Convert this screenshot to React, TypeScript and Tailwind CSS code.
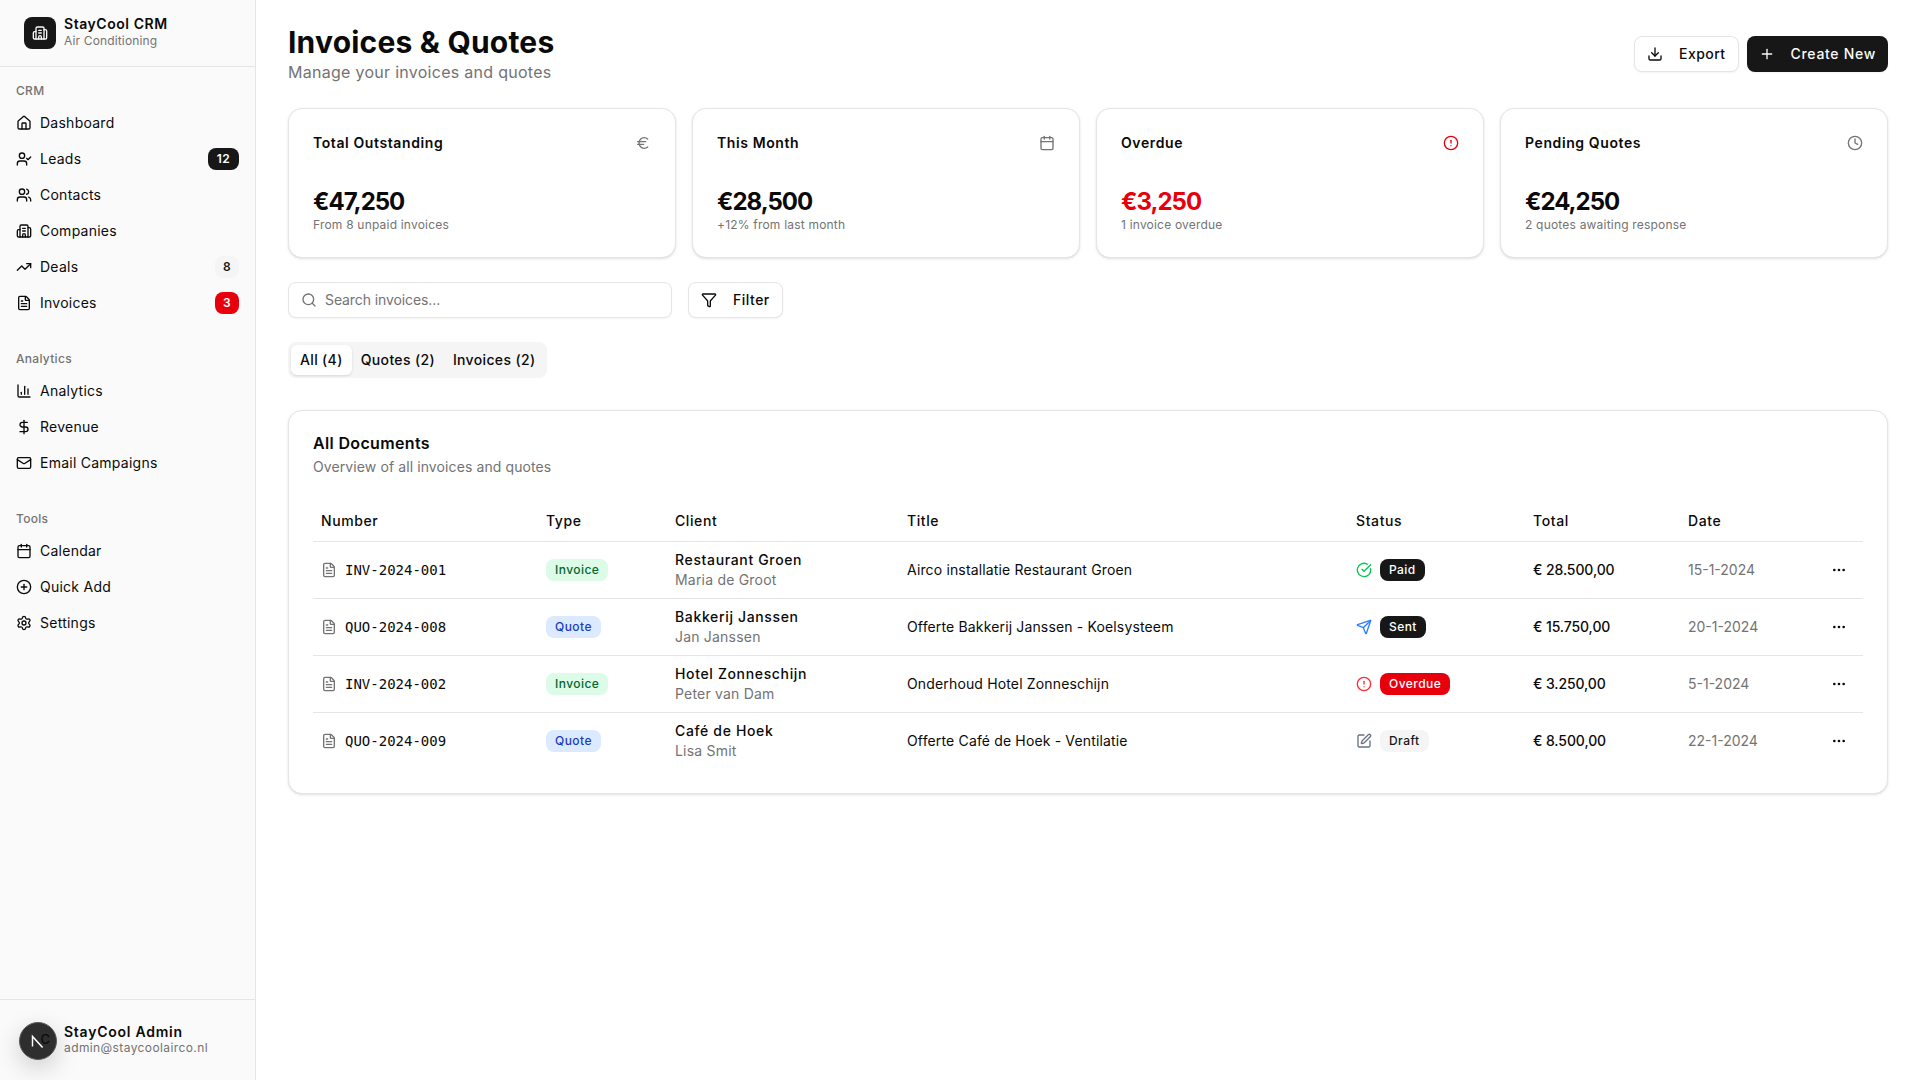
import {
  AlertCircle,
  BarChart3,
  Building2,
  Calendar,
  CheckCircle,
  CirclePlus,
  Clock,
  DollarSign,
  Download,
  Euro,
  FileText,
  Filter,
  House,
  Mail,
  MoreHorizontal,
  Plus,
  Search,
  Send,
  Settings,
  SquarePen,
  TrendingUp,
  UserCheck,
  Users,
} from "lucide-react";

const navGroups = [
  {
    title: "CRM",
    items: [
      { label: "Dashboard", icon: House },
      { label: "Leads", icon: UserCheck, badge: "12", badgeClass: "bg-[#171717] text-white px-[9px]" },
      { label: "Contacts", icon: Users },
      { label: "Companies", icon: Building2 },
      { label: "Deals", icon: TrendingUp, badge: "8", badgeClass: "bg-[#f5f5f5] text-[#171717] px-[8px]" },
      { label: "Invoices", icon: FileText, badge: "3", badgeClass: "bg-[#e7000b] text-white px-[8px]" },
    ],
  },
  {
    title: "Analytics",
    items: [
      { label: "Analytics", icon: BarChart3 },
      { label: "Revenue", icon: DollarSign },
      { label: "Email Campaigns", icon: Mail },
    ],
  },
  {
    title: "Tools",
    items: [
      { label: "Calendar", icon: Calendar },
      { label: "Quick Add", icon: CirclePlus },
      { label: "Settings", icon: Settings },
    ],
  },
];

const stats = [
  { title: "Total Outstanding", value: "€47,250", note: "From 8 unpaid invoices", icon: Euro, iconClass: "text-[#737373]", valueClass: "text-[#0a0a0a]" },
  { title: "This Month", value: "€28,500", note: "+12% from last month", icon: Calendar, iconClass: "text-[#737373]", valueClass: "text-[#0a0a0a]" },
  { title: "Overdue", value: "€3,250", note: "1 invoice overdue", icon: AlertCircle, iconClass: "text-[#e7000b]", valueClass: "text-[#e7000b]" },
  { title: "Pending Quotes", value: "€24,250", note: "2 quotes awaiting response", icon: Clock, iconClass: "text-[#737373]", valueClass: "text-[#0a0a0a]" },
];

const rows = [
  { number: "INV-2024-001", type: "Invoice", client: "Restaurant Groen", contact: "Maria de Groot", title: "Airco installatie Restaurant Groen", status: "Paid", total: "€ 28.500,00", date: "15-1-2024" },
  { number: "QUO-2024-008", type: "Quote", client: "Bakkerij Janssen", contact: "Jan Janssen", title: "Offerte Bakkerij Janssen - Koelsysteem", status: "Sent", total: "€ 15.750,00", date: "20-1-2024" },
  { number: "INV-2024-002", type: "Invoice", client: "Hotel Zonneschijn", contact: "Peter van Dam", title: "Onderhoud Hotel Zonneschijn", status: "Overdue", total: "€ 3.250,00", date: "5-1-2024" },
  { number: "QUO-2024-009", type: "Quote", client: "Café de Hoek", contact: "Lisa Smit", title: "Offerte Café de Hoek - Ventilatie", status: "Draft", total: "€ 8.500,00", date: "22-1-2024" },
];

function Pill({ className, children }: { className: string; children: string }) {
  return (
    <span className={`inline-flex h-[22px] items-center rounded-lg text-xs font-medium tracking-[0.45px] px-[9px] ${className}`}>
      {children}
    </span>
  );
}

function StatusCell({ status }: { status: string }) {
  if (status === "Paid") {
    return (
      <div className="flex items-center gap-2">
        <CheckCircle className="w-4 h-4 text-[#00c950]" />
        <Pill className="bg-[#171717] text-white">Paid</Pill>
      </div>
    );
  }
  if (status === "Sent") {
    return (
      <div className="flex items-center gap-2">
        <Send className="w-4 h-4 text-[#2b7fff]" />
        <Pill className="bg-[#171717] text-white">Sent</Pill>
      </div>
    );
  }
  if (status === "Overdue") {
    return (
      <div className="flex items-center gap-2">
        <AlertCircle className="w-4 h-4 text-[#fb2c36]" />
        <Pill className="bg-[#e7000b] text-white">Overdue</Pill>
      </div>
    );
  }
  return (
    <div className="flex items-center gap-2">
      <SquarePen className="w-4 h-4 text-[#6a7282]" />
      <Pill className="bg-[#f5f5f5] text-[#171717]">Draft</Pill>
    </div>
  );
}

export default function App() {
  return (
    <div className="flex h-screen bg-white text-[#0a0a0a] font-['Inter',sans-serif] overflow-hidden">
      {/* Sidebar */}
      <aside className="w-[256px] shrink-0 flex flex-col bg-[#fafafa] border-r border-[#e5e5e5]">
        <div className="h-[67px] flex items-center gap-2 px-6 border-b border-[#e5e5e5]">
          <div className="w-8 h-8 rounded-lg bg-[#171717] flex items-center justify-center">
            <Building2 className="w-4 h-4 text-[#fafafa]" />
          </div>
          <div className="mb-[2px]">
            <p className="text-sm font-semibold leading-[17px] tracking-[0.55px] text-[#0a0a0a]">StayCool CRM</p>
            <p className="text-xs leading-[16px] mt-[1px] tracking-[0.15px] text-[#737373]">Air Conditioning</p>
          </div>
        </div>

        <nav className="flex-1 pt-[2px] px-2">
          {navGroups.map((group) => (
            <div key={group.title} className="p-2 mb-2">
              <p className="h-7 flex items-center text-xs font-medium tracking-[0.3px] text-[#737373]">{group.title}</p>
              <ul>
                {group.items.map((item) => (
                  <li key={item.label} className="h-9 flex items-center gap-2 text-sm tracking-[0.25px] text-[#0a0a0a]">
                    <item.icon className="w-4 h-4" />
                    <span className="flex-1">{item.label}</span>
                    {item.badge && (
                      <span className={`rounded-lg text-xs font-semibold tracking-[0.3px] py-[3px] ${item.badgeClass}`}>{item.badge}</span>
                    )}
                  </li>
                ))}
              </ul>
            </div>
          ))}
        </nav>

        <div className="h-[81px] flex items-center gap-2 px-6 border-t border-[#e5e5e5]">
          <div className="relative w-8 h-8 shrink-0">
            <div className="absolute -left-[5px] -top-[2px] w-[38px] h-[38px] rounded-full bg-[#2e2e2e] border border-[#5a5a5a] shadow-[0_8px_24px_rgba(0,0,0,0.18)] flex items-center justify-center">
              <svg viewBox="0 0 24 24" className="w-[22px] h-[22px]" fill="none">
                <path d="M6 18V7l11 12" stroke="#fff" strokeWidth="1.6" />
              </svg>
              <span className="absolute right-[6px] top-[8px] text-[13px] leading-[16px] font-medium text-[#0a0a0a]">C</span>
            </div>
          </div>
          <div>
            <p className="text-sm font-semibold leading-[17px] tracking-[0.75px] -mt-[2px]">StayCool Admin</p>
            <p className="text-xs leading-[16px] tracking-[0.4px] text-[#737373]">admin@staycoolairco.nl</p>
          </div>
        </div>
      </aside>

      {/* Main */}
      <main className="flex-1 min-w-0 px-8 pt-6">
        <div className="flex items-start justify-between h-[60px] mb-6">
          <div>
            <h1 className="text-3xl font-bold leading-[36px] tracking-[0.2px]">Invoices &amp; Quotes</h1>
            <p className="text-base leading-[24px] tracking-[0.28px] text-[#737373]">Manage your invoices and quotes</p>
          </div>
          <div className="flex gap-2 mt-[12px]">
            <button className="h-9 flex items-center gap-4 px-3 rounded-lg border border-[#e5e5e5] bg-white text-sm font-medium tracking-[0.45px] shadow-xs">
              <Download className="w-4 h-4" />
              Export
            </button>
            <button className="h-9 flex items-center gap-4 px-3 rounded-lg bg-[#171717] text-[#fafafa] text-sm font-medium tracking-[0.7px] shadow-xs">
              <Plus className="w-4 h-4" />
              Create New
            </button>
          </div>
        </div>

        <div className="grid grid-cols-4 gap-4 mb-6">
          {stats.map((s) => (
            <div key={s.title} className="h-[150px] rounded-[14px] border border-[#e5e5e5] bg-white shadow-sm p-6">
              <div className="flex items-center justify-between h-5">
                <h3 className="text-sm font-semibold tracking-[0.6px]">{s.title}</h3>
                <s.icon className={`w-4 h-4 ${s.iconClass}`} />
              </div>
              <p className={`text-2xl font-bold leading-[32px] mt-[33px] tracking-[-1px] ${s.valueClass}`}>{s.value}</p>
              <p className="text-xs leading-[16px] tracking-[0.2px] -mt-[1px] text-[#737373]">{s.note}</p>
            </div>
          ))}
        </div>

        <div className="flex items-center gap-4 mb-6">
          <div className="w-[384px] h-9 flex items-center gap-2 rounded-lg border border-[#e5e5e5] bg-white shadow-xs px-3">
            <Search className="w-4 h-4 text-[#737373]" />
            <span className="text-sm tracking-[-0.1px] text-[#737373]">Search invoices...</span>
          </div>
          <button className="h-9 flex items-center gap-4 px-3 rounded-lg border border-[#e5e5e5] bg-white text-sm font-medium tracking-[0.5px] shadow-xs">
            <Filter className="w-4 h-4" />
            Filter
          </button>
        </div>

        <div className="inline-flex h-9 items-center rounded-lg bg-[#f5f5f5] p-[3px] mb-8 text-sm font-medium tracking-[0.35px]">
          <span className="h-full flex items-center rounded-md bg-white shadow-sm px-[9px]">All (4)</span>
          <span className="h-full flex items-center px-[9px]">Quotes (2)</span>
          <span className="h-full flex items-center px-[9px]">Invoices (2)</span>
        </div>

        <section className="rounded-[14px] border border-[#e5e5e5] bg-white shadow-sm px-6 pt-6 pb-6">
          <h2 className="text-base font-semibold leading-[16px] tracking-[0.35px]">All Documents</h2>
          <p className="text-sm leading-[20px] tracking-[0.1px] text-[#737373] mt-[6px] mb-6">Overview of all invoices and quotes</p>
          <table className="w-full table-fixed text-sm">
            <thead>
              <tr className="h-10 border-b border-[#e5e5e5] text-left tracking-[0.6px]">
                <th className="w-[225px] px-2 font-medium">Number</th>
                <th className="w-[129px] px-2 font-medium">Type</th>
                <th className="w-[232px] px-2 font-medium">Client</th>
                <th className="w-[449px] px-2 font-medium">Title</th>
                <th className="w-[177px] px-2 font-medium">Status</th>
                <th className="w-[155px] px-2 font-medium">Total</th>
                <th className="px-2 font-medium">Date</th>
                <th className="w-[61px] px-2"></th>
              </tr>
            </thead>
            <tbody>
              {rows.map((r, i) => (
                <tr key={r.number} className={`h-[57px] ${i < rows.length - 1 ? "border-b border-[#e5e5e5]" : ""}`}>
                  <td className="px-2">
                    <div className="flex items-center gap-2">
                      <FileText className="w-4 h-4 text-[#737373]" />
                      <span className="font-['DejaVu_Sans_Mono',monospace] text-sm">{r.number}</span>
                    </div>
                  </td>
                  <td className="px-2">
                    {r.type === "Invoice" ? (
                      <Pill className="bg-[#dcfce7] text-[#016630]">Invoice</Pill>
                    ) : (
                      <Pill className="bg-[#dbeafe] text-[#193cb8]">Quote</Pill>
                    )}
                  </td>
                  <td className="px-2">
                    <p className="font-medium leading-[20px] tracking-[0.65px]">{r.client}</p>
                    <p className="leading-[20px] tracking-[0.2px] text-[#737373]">{r.contact}</p>
                  </td>
                  <td className="px-2 tracking-[0.15px]">{r.title}</td>
                  <td className="px-2">
                    <StatusCell status={r.status} />
                  </td>
                  <td className="px-2 font-medium tracking-[-0.1px]">{r.total}</td>
                  <td className="px-2 text-[#737373]">{r.date}</td>
                  <td className="px-2">
                    <MoreHorizontal className="w-4 h-4 ml-[21px]" />
                  </td>
                </tr>
              ))}
            </tbody>
          </table>
        </section>
      </main>
    </div>
  );
}
